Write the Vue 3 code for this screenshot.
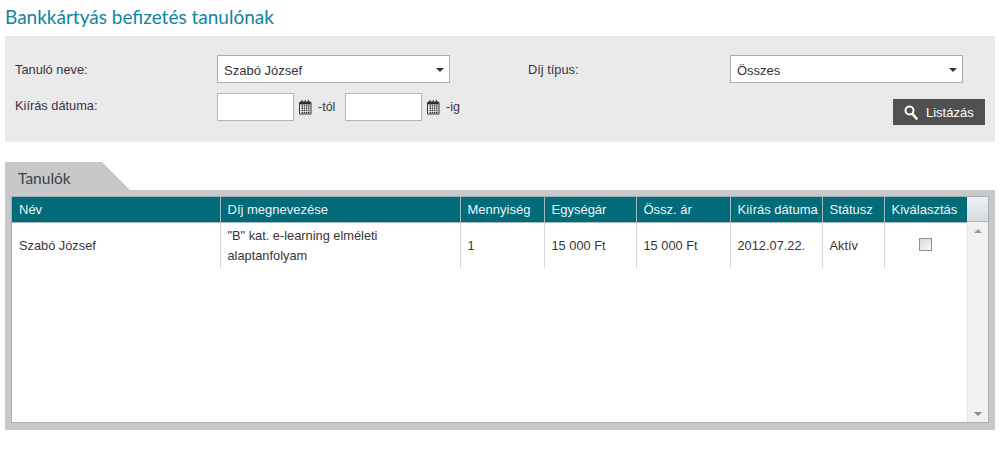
<script setup>
const columns = [
  { label: 'Név', width: 208 },
  { label: 'Díj megnevezése', width: 240 },
  { label: 'Mennyiség', width: 84 },
  { label: 'Egységár', width: 92 },
  { label: 'Össz. ár', width: 94 },
  { label: 'Kiírás dátuma', width: 92 },
  { label: 'Státusz', width: 62 },
  { label: 'Kiválasztás', width: 83 }
]
const calCells = []
for (let row = 0; row < 4; row++) {
  for (let col = 0; col < 4; col++) {
    calCells.push({ x: 2.5 + col * 2.2, y: 5.2 + row * 2.2 })
  }
}
</script>

<template>
  <main class="page">
    <h1 class="title">Bankkártyás befizetés tanulónak</h1>

    <section class="filter">
      <label class="label">Tanuló neve:</label>
      <div class="select"><span>Szabó József</span><i class="caret"></i></div>
      <label class="label">Díj típus:</label>
      <div class="select"><span>Összes</span><i class="caret"></i></div>

      <label class="label date-label">Kiírás dátuma:</label>
      <div class="dates">
        <input class="date" type="text" />
        <svg class="cal" width="13" height="15" viewBox="0 0 13 15">
          <path d="M.5 2.500h11.500v11.500H.5z" fill="#fff" stroke="#2f2f2f" />
          <path d="M1 1.500h10.500V4.500H1z" fill="#2f2f2f" />
          <path d="M2.500 0h1v2h-1zM5.700 0h1v2h-1zM8.900 0h1v2h-1z" fill="#2f2f2f" />
          <rect v-for="(c, i) in calCells" :key="i" :x="c.x" :y="c.y" width="1.500" height="1.500" fill="#2f2f2f" />
        </svg>
        <span class="suffix first">-tól</span>
        <input class="date" type="text" />
        <svg class="cal" width="13" height="15" viewBox="0 0 13 15">
          <path d="M.5 2.500h11.500v11.500H.5z" fill="#fff" stroke="#2f2f2f" />
          <path d="M1 1.500h10.500V4.500H1z" fill="#2f2f2f" />
          <path d="M2.500 0h1v2h-1zM5.700 0h1v2h-1zM8.900 0h1v2h-1z" fill="#2f2f2f" />
          <rect v-for="(c, i) in calCells" :key="i" :x="c.x" :y="c.y" width="1.500" height="1.500" fill="#2f2f2f" />
        </svg>
        <span class="suffix">-ig</span>
      </div>
      <button class="search" type="button">
        <svg width="14" height="15" viewBox="0 0 14 15">
          <circle cx="5.500" cy="5.500" r="4" fill="none" stroke="#fff" stroke-width="2" />
          <path d="M8.500 9l4 4.500" stroke="#fff" stroke-width="2.600" stroke-linecap="round" />
        </svg>
        <span>Listázás</span>
      </button>
    </section>

    <div class="tab"><span>Tanulók</span></div>
    <section class="frame">
      <div class="grid">
        <div class="table-side">
          <table>
            <colgroup>
              <col v-for="c in columns" :key="c.label" :style="{ width: c.width + 'px' }" />
            </colgroup>
            <thead>
              <tr><th v-for="c in columns" :key="c.label">{{ c.label }}</th></tr>
            </thead>
            <tbody>
              <tr>
                <td>Szabó József</td>
                <td>"B" kat. e-learning elméleti alaptanfolyam</td>
                <td>1</td>
                <td>15 000 Ft</td>
                <td>15 000 Ft</td>
                <td>2012.07.22.</td>
                <td>Aktív</td>
                <td class="center"><span class="check"></span></td>
              </tr>
            </tbody>
          </table>
        </div>
        <div class="scroll-side">
          <div class="scroll-head"></div>
          <div class="scroll-track">
            <i class="arrow up"></i>
            <i class="arrow down"></i>
          </div>
        </div>
      </div>
    </section>
  </main>
</template>

<style scoped>
.page {
  width: 990px;
  padding: 0 8px 0 5px;
  font-family: "Liberation Sans", Arial, sans-serif;
  font-size: 13px;
  color: #333;
}
.title {
  margin: 0;
  height: 36px;
  font-family: Lato, sans-serif;
  font-size: 19px;
  line-height: 33px;
  font-weight: 400;
  color: #12839f;
}
.filter {
  height: 106px;
  box-sizing: border-box;
  padding: 19px 10px 0;
  background: #eaeaea;
  display: grid;
  grid-template-columns: 202px 311px 202px 1fr;
  grid-template-rows: 28px 32px;
  row-gap: 10px;
  align-items: center;
}
.label {
  color: #3a3340;
  font-size: 12.800px;
}
.date-label {
  align-self: start;
  margin-top: 5px;
}
.select {
  width: 233px;
  height: 28px;
  box-sizing: border-box;
  border: 1px solid #a6adb5;
  background: #fff;
  padding: 2px 5px 0 6px;
  display: flex;
  align-items: center;
  justify-content: space-between;
}
.caret {
  width: 0;
  height: 0;
  border-left: 4px solid transparent;
  border-right: 4px solid transparent;
  border-top: 4px solid #333;
}
.dates {
  grid-column: 2 / 4;
  display: flex;
  align-items: center;
  align-self: start;
  height: 28px;
}
.date {
  width: 77px;
  height: 28px;
  box-sizing: border-box;
  border: 1px solid #b5b5b5;
  background: #fff;
  padding: 0;
  margin: 0;
}
.cal {
  margin-left: 5px;
}
.suffix {
  margin-left: 6px;
  color: #3a3340;
  font-size: 12.500px;
}
.suffix.first {
  width: 27px;
}
.search {
  grid-column: 4;
  justify-self: end;
  align-self: start;
  margin-top: 6px;
  width: 92px;
  height: 26px;
  border: 0;
  padding: 0 0 0 11px;
  background: #505050;
  color: #fff;
  font: inherit;
  display: flex;
  align-items: center;
  gap: 8px;
}
.tab {
  margin-top: 20px;
  width: 125px;
  height: 28px;
  background: #c8c8c8;
  clip-path: polygon(0 0, 97px 0, 125px 28px, 0 28px);
}
.tab span {
  display: block;
  padding-left: 13px;
  font-family: Lato, sans-serif;
  font-size: 15.500px;
  line-height: 32px;
  color: #3c4148;
}
.frame {
  background: #c8c8c8;
  padding: 6px 6px 7px;
}
.grid {
  display: flex;
  height: 227px;
  box-sizing: border-box;
  border: 1px solid #a6b0bb;
  background: #fff;
}
.table-side {
  width: 955px;
}
table {
  width: 955px;
  border-collapse: collapse;
  table-layout: fixed;
}
th {
  height: 25px;
  padding: 0 0 0 7px;
  box-sizing: border-box;
  background: #006b79;
  border-left: 1px solid #a9b8c2;
  border-bottom: 1px solid #a9b8c2;
  color: #eef4f6;
  font-weight: 400;
  text-align: left;
  white-space: nowrap;
}
th:first-child,
td:first-child {
  border-left: 0;
}
td {
  height: 46px;
  padding: 2px 8px 0 7px;
  box-sizing: border-box;
  border-left: 1px solid #d3d6da;
  line-height: 20px;
  color: #3b3535;
  font-size: 12.800px;
}
td.center {
  text-align: center;
  padding: 0;
}
.check {
  display: block;
  width: 13px;
  height: 13px;
  margin: -1px auto 0;
  box-sizing: border-box;
  border: 1px solid #8f8f8f;
  background: linear-gradient(135deg, #d9d9d9, #f6f6f6);
}
.scroll-side {
  flex: 1;
  display: flex;
  flex-direction: column;
}
.scroll-head {
  height: 25px;
  box-sizing: border-box;
  background: linear-gradient(#f1f1f3, #d9dbde);
  border-bottom: 1px solid #a9b8c2;
}
.scroll-track {
  flex: 1;
  background: #f1f1f1;
  border-left: 1px solid #e6e6e6;
  display: flex;
  flex-direction: column;
  justify-content: space-between;
  align-items: center;
  padding: 7px 0 6px;
}
.arrow {
  width: 0;
  height: 0;
  border-left: 4px solid transparent;
  border-right: 4px solid transparent;
}
.arrow.up {
  border-bottom: 4px solid #9a9a9a;
}
.arrow.down {
  border-top: 4px solid #8a8a8a;
}
</style>
